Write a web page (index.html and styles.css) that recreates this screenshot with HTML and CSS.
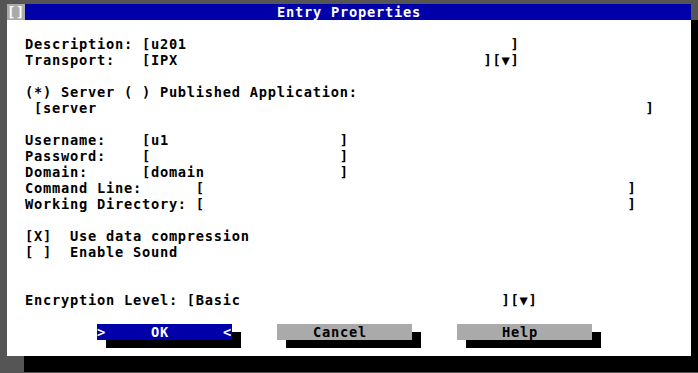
FILE: index.html
```html
<!DOCTYPE html>
<html lang="en">
<head>
  <meta charset="UTF-8">
  <meta name="viewport" content="width=device-width, initial-scale=1.0">
  <title>Entry Properties</title>
  <link rel="stylesheet" href="styles.css">
</head>
<body>
  <div class="dialog">
    <div class="titlebar">
      <span class="close">[]</span>
      <span class="title">Entry Properties</span>
      <span class="pad"></span>
    </div>
    <div class="content">
      <div class="group">
        <div class="line">Description: [u201                                    ]</div>
        <div class="line">Transport:   [IPX                                  ][▼]</div>
      </div>
      <div class="group">
        <div class="line">(*) Server ( ) Published Application:</div>
        <div class="line"> [server                                                             ]</div>
      </div>
      <div class="group">
        <div class="line">Username:    [u1                   ]</div>
        <div class="line">Password:    [                     ]</div>
        <div class="line">Domain:      [domain               ]</div>
        <div class="line">Command Line:      [                                               ]</div>
        <div class="line">Working Directory: [                                               ]</div>
      </div>
      <div class="group">
        <div class="line">[X]  Use data compression</div>
        <div class="line">[ ]  Enable Sound</div>
      </div>
      <div class="group wide">
        <div class="line">Encryption Level: [Basic                             ][▼]</div>
      </div>
      <div class="buttons">
        <button class="btn active">&gt;     OK      &lt;</button>
        <button class="btn">    Cancel     </button>
        <button class="btn">     Help      </button>
      </div>
    </div>
  </div>
</body>
</html>
```

FILE: styles.css
```css
body {
  margin: 0;
  height: 373px;
  overflow: hidden;
  background-color: #555555;
  font-family: 'DejaVu Sans Mono', 'Liberation Mono', monospace;
  font-size: 13.7px;
  letter-spacing: 0.752px;
  font-weight: bold;
  line-height: 16px;
  color: #000;
}

.dialog {
  width: 684px;
  height: 352px;
  margin: 4px 0 0 7px;
  background-color: #fff;
  box-shadow: 17px 16px 0 #000;
}

.titlebar {
  display: grid;
  grid-template-columns: 18px 1fr 18px;
  height: 16px;
  white-space: pre;
}

.close {
  background-color: #aaaaaa;
  color: #fff;
}

.title,
.pad {
  background-color: #0000aa;
  color: #fff;
}

.title {
  text-align: center;
}

.content {
  padding: 16px 0 0 18px;
}

.group {
  margin-bottom: 16px;
}

.group.wide {
  margin-top: 32px;
}

.line {
  height: 16px;
  white-space: pre;
}

.buttons {
  display: flex;
  gap: 45px;
  padding-left: 72px;
}

.btn {
  width: 135px;
  height: 16px;
  padding: 0;
  margin: 0;
  border: none;
  font: inherit;
  letter-spacing: inherit;
  line-height: 16px;
  white-space: pre;
  text-align: left;
  color: #000;
  background-color: #aaaaaa;
  box-shadow: 9px 8px 0 #000;
}

.btn.active {
  background-color: #0000aa;
  color: #fff;
}
```
